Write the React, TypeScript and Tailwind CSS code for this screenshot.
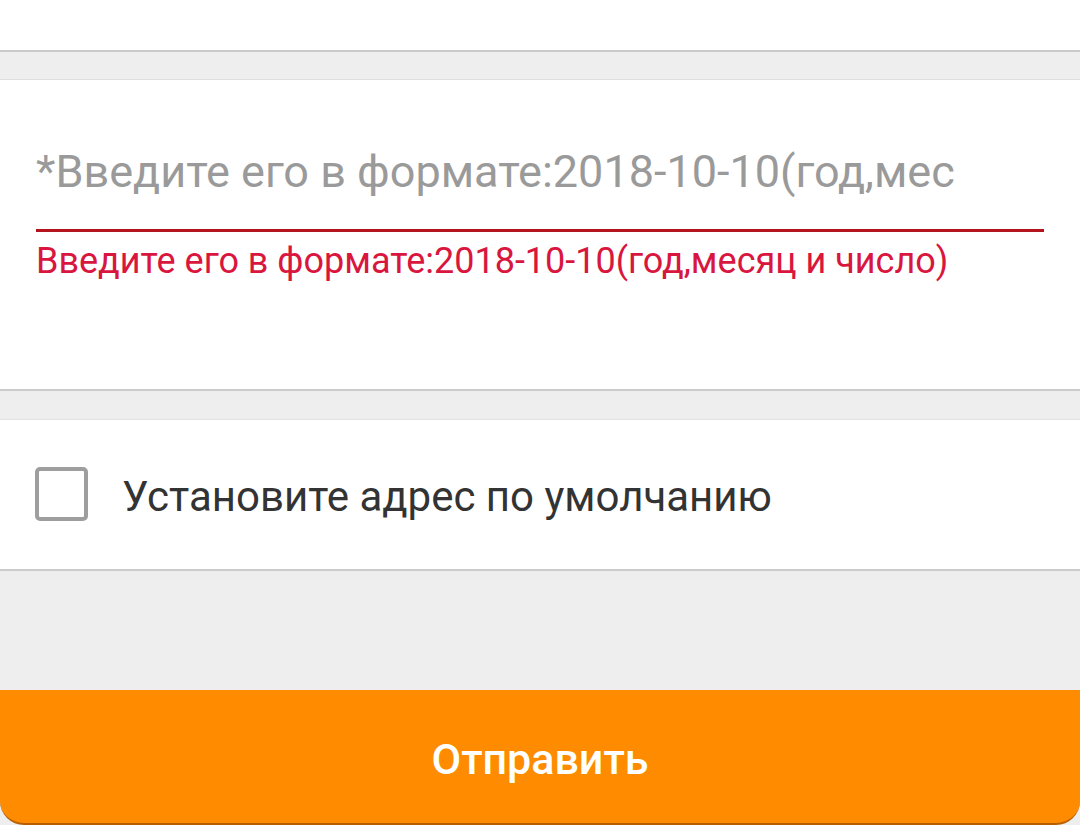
import React from "react";

export default function App() {
  return (
    <div className="w-[1080px] h-[825px] bg-[#eeeeee] flex flex-col overflow-hidden" style={{ fontFamily: "Roboto, 'Noto Sans', sans-serif" }}>
      <div className="h-[50px] bg-white shrink-0" />
      <div className="h-[2px] bg-[#cacaca] shrink-0" />
      <div className="h-[27px] shrink-0 bg-[#eeeeee]" />
      <div className="h-px bg-[#dedede] shrink-0" />
      <div className="h-[309px] bg-white shrink-0 px-[36px] pt-[69px]">
        <div className="text-[45px] leading-[45px] text-[#9a9a9a] whitespace-nowrap">
          *Введите его в формате:2018-10-10(год,мес
        </div>
        <div className="h-[3px] bg-[#b3141e] w-[1008px] mt-[35px]" />
        <div className="text-[36px] leading-[36px] text-[#d8163e] whitespace-nowrap mt-[11px]">
          Введите его в формате:2018-10-10(год,месяц и число)
        </div>
      </div>
      <div className="h-[2px] bg-[#cbcbcb] shrink-0" />
      <div className="h-[28px] shrink-0" />
      <div className="h-px bg-[#e2e2e2] shrink-0" />
      <div className="h-[149px] bg-white shrink-0 flex items-center px-[35px] gap-[34px]">
        <div className="w-[53px] h-[54px] border-[4px] border-[#9e9e9e] rounded-[5px] shrink-0 -mt-[1px]" />
        <div className="text-[42px] leading-[42px] text-[#333333] whitespace-nowrap pt-[4px]">Установите адрес по умолчанию</div>
      </div>
      <div className="h-[2px] bg-[#cbcbcb] shrink-0" />
      <div className="flex-1" />
      <div className="h-[135px] shrink-0 bg-[#ff8b00] rounded-b-[24px] border-b-2 border-[#b75f00] flex items-center justify-center pt-[6px]">
        <span className="text-[43px] leading-[43px] font-medium text-white">Отправить</span>
      </div>
    </div>
  );
}
